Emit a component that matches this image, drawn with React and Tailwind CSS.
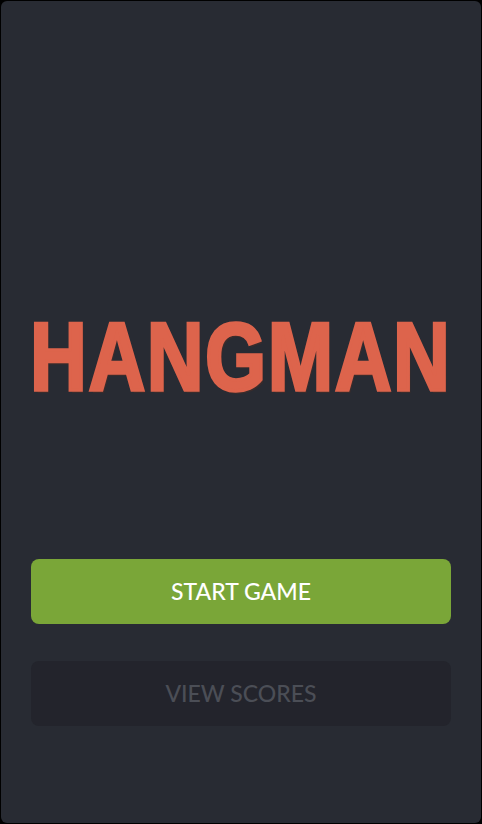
export default function App() {
  return (
    <div className="h-[824px] w-[482px] bg-black p-px">
      <div className="flex h-full flex-col rounded-[6px] bg-[#282b33] px-[30px]">
        <div className="flex flex-1 items-center justify-center pt-[154px]">
          <h1 className="scale-y-[1.23] font-['Liberation_Sans',sans-serif] text-[78px] font-bold leading-none tracking-[2px] text-[#dd644c] [-webkit-text-stroke:3px_#dd644c] [text-shadow:2px_2px_0_#3a2c2c]">
            HANGMAN
          </h1>
        </div>
        <div className="flex flex-col gap-[37px] pb-[97px] font-['Lato',sans-serif]">
          <button className="h-[65px] rounded-[8px] bg-[#7aa638] text-[23px] font-medium text-white">
            START GAME
          </button>
          <button className="h-[65px] rounded-[8px] bg-[#23242c] text-[23px] font-medium text-[#4b4e56]">
            VIEW SCORES
          </button>
        </div>
      </div>
    </div>
  );
}
